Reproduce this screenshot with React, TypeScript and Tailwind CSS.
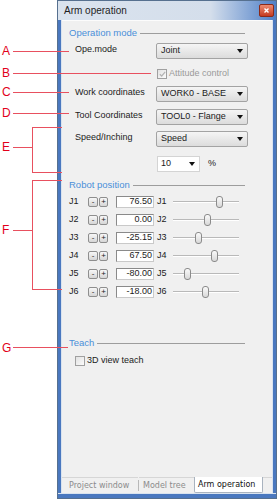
import React from 'react';

const joints = [
  { name: 'J1', value: '76.50', pos: 46 },
  { name: 'J2', value: '0.00', pos: 34 },
  { name: 'J3', value: '-25.15', pos: 25 },
  { name: 'J4', value: '67.50', pos: 41 },
  { name: 'J5', value: '-80.00', pos: 14 },
  { name: 'J6', value: '-18.00', pos: 32 },
];

const Arrow = () => (
  <svg width="6" height="4" viewBox="0 0 6 4">
    <path d="M0 0h6L3 4z" fill="#111" />
  </svg>
);

const Combo = ({ value }: { value: string }) => (
  <div className="flex h-[16px] w-[92px] items-center justify-between rounded-[2px] border border-[#a3a3a3] bg-linear-to-b from-[#f5f5f5] to-[#dcdcdc] pl-[4px] pr-[4px]">
    <span>{value}</span>
    <Arrow />
  </div>
);

const Section = ({ title, className }: { title: string; className: string }) => (
  <div className={`flex h-[12px] items-center pl-[7px] pr-[27px] ${className}`}>
    <span className="text-[9.5px] text-[#4a8fd9]">{title}</span>
    <div className="ml-[3px] h-px flex-1 bg-[#9d9d9d]" />
  </div>
);

const FormRow = ({ label, value, className }: { label: string; value: string; className: string }) => (
  <div className={`flex h-[16px] items-center pl-[13px] ${className}`}>
    <span className="w-[81px] pb-[2px]">{label}</span>
    <Combo value={value} />
  </div>
);

const Check = ({ checked, disabled }: { checked?: boolean; disabled?: boolean }) => (
  <div className="flex h-[10px] w-[10px] items-center justify-center border border-[#a0a0a0] bg-linear-to-br from-[#e2e2e2] to-[#fbfbfb]">
    {checked && (
      <svg width="7" height="6" viewBox="0 0 7 6">
        <path d="M0.8 3.2L2.7 5L6.2 0.8" fill="none" stroke={disabled ? '#b4b4b4' : '#333'} strokeWidth="1.2" />
      </svg>
    )}
  </div>
);

const SmallBtn = ({ label, className }: { label: string; className: string }) => (
  <div className={`flex h-[10px] items-center justify-center rounded-[2px] border border-[#8e8e8e] bg-linear-to-b from-[#f7f7f7] to-[#d6d6d6] text-[8px] leading-none ${className}`}>
    {label}
  </div>
);

const JointRow = ({ name, value, pos }: { name: string; value: string; pos: number }) => (
  <div className="flex h-[14px] items-center pl-[7px]">
    <span className="w-[19px]">{name}</span>
    <SmallBtn label="-" className="w-[10px]" />
    <SmallBtn label="+" className="ml-[1px] w-[9px]" />
    <div className="ml-[8px] flex h-[12px] w-[38px] items-center justify-end border border-[#8a8a8a] border-b-[#c9c9c9] border-r-[#c9c9c9] bg-white pr-[1px]">
      {value}
    </div>
    <span className="ml-[3px] w-[16px]">{name}</span>
    <div className="relative h-[12px] w-[66px]">
      <div className="absolute left-0 right-0 top-[5px] h-[2px] border-t border-b border-t-[#b9b9b9] border-b-[#ffffff]" />
      <div
        className="absolute top-0 h-[12px] w-[7px] rounded-[3px] border border-[#8b8b8b] bg-linear-to-b from-[#fafafa] to-[#d8d8d8]"
        style={{ left: pos - 3 }}
      />
    </div>
  </div>
);

const Letter = ({ ch, className }: { ch: string; className: string }) => (
  <div className={`absolute left-[2px] text-[12px] leading-none text-[#e2001a] ${className}`}>{ch}</div>
);

const Line = ({ className }: { className: string }) => (
  <div className={`absolute bg-[#e8505f] ${className}`} />
);

export default function App() {
  return (
    <div className="relative h-[501px] w-[277px] overflow-hidden bg-white font-['Liberation_Sans',Arial,sans-serif] text-[9px] text-[#1b1b1b]">
      {/* window */}
      <div className="ml-[57px] flex h-[499px] w-[220px] flex-col border border-[#56708f] bg-[#4d7bc2]">
        <div className="flex h-[19px] items-center justify-between bg-linear-to-r from-[#dae3ee] via-[#d4deeb] via-70% to-[#4f7fc6] pl-[6px] pr-[2px]">
          <span className="text-[10px] text-[#1e1e1e]">Arm operation</span>
          <div className="mb-[1px] flex h-[13px] w-[15px] items-center justify-center rounded-[2px] border border-[#8a2a1a] bg-linear-to-b from-[#eb8a70] to-[#c4391f]">
            <svg width="5" height="5" viewBox="0 0 5 5">
              <path d="M0.5 0.5L4.5 4.5M4.5 0.5L0.5 4.5" stroke="#fff" strokeWidth="1.4" />
            </svg>
          </div>
        </div>
        <div className="flex flex-1">
          <div className="w-[4px] border-r border-[#d9e3ef] bg-[#4a78bf]" />
          <div className="flex w-[210px] flex-col border-t border-[#fcfcfc] bg-[#f0f0f0]">
            <Section title="Operation mode" className="mt-[6px]" />
            <FormRow label="Ope.mode" value="Joint" className="mt-[4px]" />
            <div className="mt-[9px] flex h-[12px] items-center pl-[95px] text-[#9a9a9a]">
              <Check checked disabled />
              <span className="ml-[2px]">Attitude control</span>
            </div>
            <FormRow label="Work coordinates" value="WORK0 - BASE" className="mt-[6px]" />
            <FormRow label="Tool Coordinates" value="TOOL0 - Flange" className="mt-[7px]" />
            <FormRow label="Speed/Inching" value="Speed" className="mt-[6px]" />
            <div className="mt-[9px] flex h-[16px] items-center pl-[95px]">
              <div className="flex h-[16px] w-[43px] items-center justify-between border border-[#d4d4d4] bg-white pl-[3px] pr-[4px]">
                <span>10</span>
                <Arrow />
              </div>
              <span className="ml-[8px]">%</span>
            </div>
            <Section title="Robot position" className="mt-[7px]" />
            <div className="mt-[4px] flex flex-col gap-[4px]">
              {joints.map((j) => (
                <JointRow key={j.name} {...j} />
              ))}
            </div>
            <Section title="Teach" className="mt-[38px]" />
            <div className="mt-[6px] flex h-[12px] items-center pl-[13px]">
              <Check />
              <span className="ml-[2px]">3D view teach</span>
            </div>
            <div className="flex-1" />
            <div className="flex h-[16px] font-['DejaVu_Sans',Verdana,sans-serif] text-[8px]">
              <div className="flex w-[76px] items-center border-t border-[#d6d6d6] pl-[7px] text-[#8c8c8c]">Project window</div>
              <div className="mt-[3px] h-[11px] w-px bg-[#b8b8b8]" />
              <div className="flex w-[55px] items-center border-t border-[#d6d6d6] pl-[4px] text-[#8c8c8c]">Model tree</div>
              <div className="flex w-[69px] items-center rounded-b-[2px] border-x border-b border-[#a9b3bf] bg-white pl-[3px] text-[#111]">Arm operation</div>
              <div className="flex-1 border-t border-[#d6d6d6]" />
            </div>
          </div>
          <div className="w-[4px] border-l border-[#d9e3ef] bg-[#4a78bf]" />
        </div>
        <div className="h-[5px] border-t border-[#d9e3ef] bg-[#4a78bf]" />
      </div>

      {/* annotations */}
      <Letter ch="A" className="top-[45px]" />
      <Line className="left-[13px] top-[51px] h-px w-[56px]" />
      <Letter ch="B" className="top-[67px]" />
      <Line className="left-[13px] top-[73px] h-px w-[138px]" />
      <Letter ch="C" className="top-[86px]" />
      <Line className="left-[13px] top-[92px] h-px w-[56px]" />
      <Letter ch="D" className="top-[107px]" />
      <Line className="left-[13px] top-[113px] h-px w-[56px]" />
      <Letter ch="E" className="top-[141px]" />
      <Line className="left-[13px] top-[147px] h-px w-[19px]" />
      <Line className="left-[32px] top-[127px] h-[46px] w-px" />
      <Line className="left-[32px] top-[127px] h-px w-[30px]" />
      <Line className="left-[32px] top-[172px] h-px w-[30px]" />
      <Letter ch="F" className="top-[224px]" />
      <Line className="left-[13px] top-[230px] h-px w-[19px]" />
      <Line className="left-[32px] top-[180px] h-[110px] w-px" />
      <Line className="left-[32px] top-[180px] h-px w-[30px]" />
      <Line className="left-[32px] top-[289px] h-px w-[30px]" />
      <Letter ch="G" className="top-[342px]" />
      <Line className="left-[13px] top-[347px] h-px w-[55px]" />
    </div>
  );
}
